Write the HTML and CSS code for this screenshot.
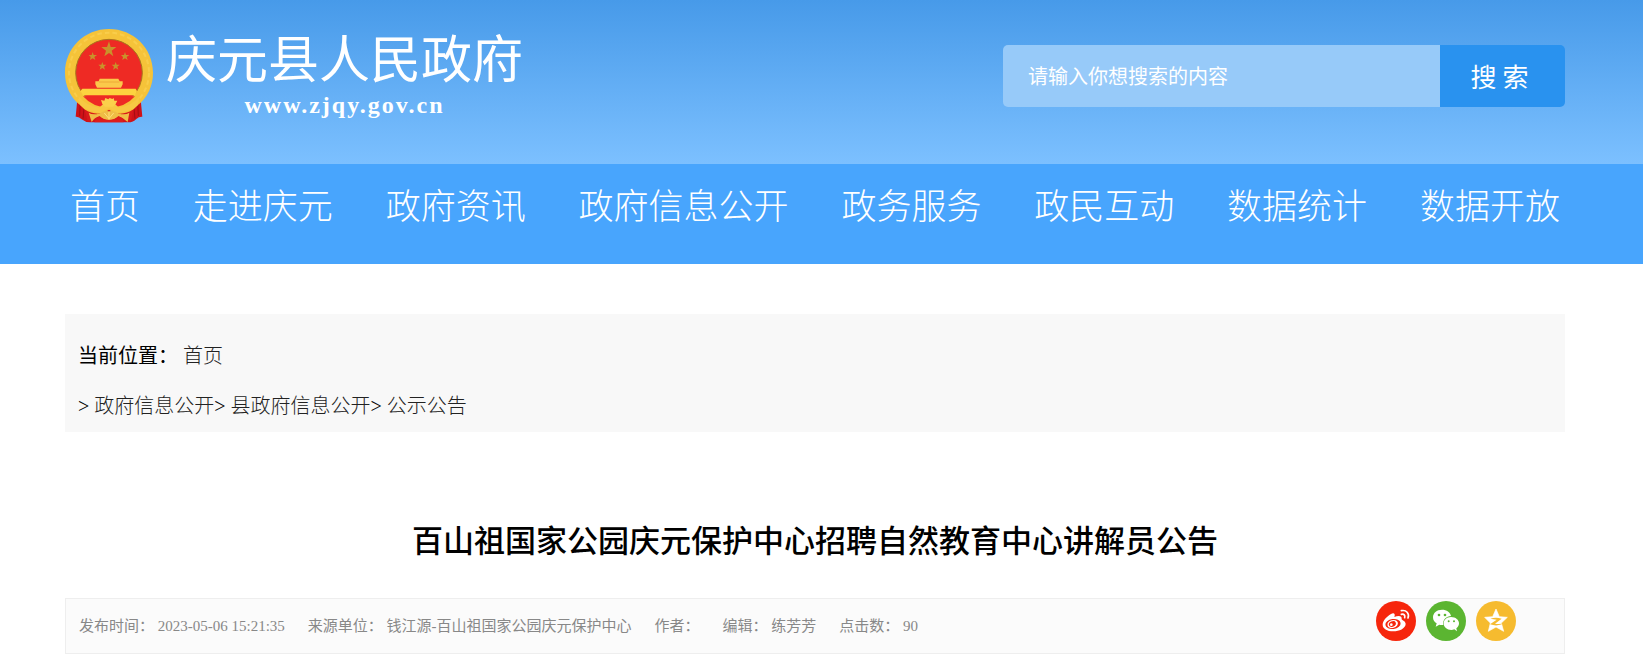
FILE: index.html
```html
<!DOCTYPE html>
<html lang="zh-CN">
<head>
    <meta charset="UTF-8">
    <meta name="viewport" content="width=device-width, initial-scale=1.0">
    <title>百山祖国家公园庆元保护中心招聘自然教育中心讲解员公告</title>
    <link rel="stylesheet" href="styles.css">
</head>
<body>
    <header class="header">
        <div class="wrap header-inner">
            <a class="logo" href="#">
                <svg class="emblem" viewBox="30 27 264 282" aria-hidden="true">
                    <!-- red drapes -->
                    <path d="M68 228 L62 290 Q72 289 80 298 Q92 308 108 307 L217 307 Q234 308 244 297 Q252 289 262 290 L256 228 Z" fill="#cf1218"/>
                    <path d="M76 240 L74 288 M88 252 L84 296 M248 240 L250 288 M236 252 L240 296" stroke="#a50d12" stroke-width="3" fill="none"/>
                    <!-- gold ring -->
                    <path d="M162 27 C235 27 294 84 294 158 C294 198 278 232 248 256 L236 268 Q200 300 162 290 Q124 300 88 268 L76 256 C46 232 30 198 30 158 C30 84 89 27 162 27 Z" fill="#f5c339"/>
                    <circle cx="162" cy="158" r="120" fill="none" stroke="#f9cd4b" stroke-width="6" stroke-dasharray="14 9"/>
                    <circle cx="162" cy="158" r="100" fill="#ee2a24" stroke="#a8741c" stroke-width="3"/>
                    <!-- stars -->
                    <g fill="#c9922b">
                        <path d="M162 64 L167 81 L184 81 L170 92 L175 109 L162 99 L148 109 L153 92 L139 81 L156 81 Z"/>
                        <path d="M113 96 L116 105 L126 105 L118 111 L121 120 L113 115 L105 120 L107 111 L101 105 L110 105 Z"/>
                        <path d="M210 96 L213 105 L223 105 L215 111 L218 120 L210 115 L202 120 L204 111 L198 105 L207 105 Z"/>
                        <path d="M142 126 L145 134 L154 134 L147 140 L150 149 L142 144 L134 149 L137 140 L130 134 L139 134 Z"/>
                        <path d="M182 126 L185 134 L194 134 L187 140 L190 149 L182 144 L174 149 L177 140 L170 134 L179 134 Z"/>
                    </g>
                    <!-- gate -->
                    <path d="M134 176 H190 L194 184 H203 V193 L198 203 H126 L121 193 V184 H131 Z" fill="#fbc94a"/>
                    <path d="M132 186 H193" stroke="#e79b2f" stroke-width="2"/>
                    <path d="M82 206 H242 L246 214 L240 226 H84 L76 214 Z" fill="#fdd23f"/>
                    <path d="M84 229 H240 Q210 263 162 263 Q114 263 84 229 Z" fill="#ee2a24"/>
                    <!-- ribbon and gear -->
                    <path d="M70 228 Q92 257 132 263 L145 252 Q162 236 180 252 L192 263 Q232 257 254 228 L248 256 Q226 277 184 278 L162 264 L140 278 Q98 277 76 256 Z" fill="#f7c843"/>
                    <path d="M142 252 L138 240 L148 242 L151 234 L160 238 L164 234 L172 237 L176 234 L178 242 L187 242 L182 252 L174 260 H150 Z" fill="#fbd04b"/>
                    <path d="M88 268 Q120 288 150 277 L162 269 L174 277 Q204 288 236 268 L228 302 L98 302 Z" fill="#d8191b"/>
                    <path d="M101 278 Q112 286 132 281 Q146 271 162 274 Q180 271 192 281 Q212 286 223 278 L218 306 Q206 293 190 289 Q180 300 162 300 Q144 300 134 289 Q118 293 110 306 Z" fill="#efbd45"/>
                    <path d="M148 279 L162 296 L176 279 M162 276 V298" stroke="#ffe07a" stroke-width="3" fill="none"/>
                    <path d="M124 295 Q130 290 134 289 Q144 300 162 300 Q180 300 190 289 Q196 290 202 295 L206 307 H118 Z" fill="#dd1d1c"/>
                </svg>
                <span class="logo-text">
                    <strong class="site-name">庆元县人民政府</strong>
                    <span class="site-url">www.zjqy.gov.cn</span>
                </span>
            </a>
            <form class="search">
                <input class="search-input" type="text" aria-label="搜索内容" placeholder="请输入你想搜索的内容">
                <button class="search-btn" type="submit">搜 索</button>
            </form>
        </div>
    </header>

    <nav class="nav">
        <ul class="wrap nav-list">
            <li><a href="#">首页</a></li>
            <li><a href="#">走进庆元</a></li>
            <li><a href="#">政府资讯</a></li>
            <li><a href="#">政府信息公开</a></li>
            <li><a href="#">政务服务</a></li>
            <li><a href="#">政民互动</a></li>
            <li><a href="#">数据统计</a></li>
            <li><a href="#">数据开放</a></li>
        </ul>
    </nav>

    <main class="wrap">
        <div class="crumbs">
            <p>当前位置： <a href="#">首页</a></p>
            <p>&gt; <a href="#">政府信息公开</a>&gt; <a href="#">县政府信息公开</a>&gt; <a href="#">公示公告</a></p>
        </div>

        <h1 class="title">百山祖国家公园庆元保护中心招聘自然教育中心讲解员公告</h1>

        <div class="meta">
            <div class="meta-info">
                <span>发布时间： 2023-05-06 15:21:35</span>
                <span>来源单位： 钱江源-百山祖国家公园庆元保护中心</span>
                <span>作者：</span>
                <span>编辑： 练芳芳</span>
                <span>点击数： 90</span>
            </div>
            <div class="share">
                <a href="#" aria-label="微博">
                    <svg viewBox="0 0 120 120">
                        <circle cx="60" cy="60" r="60" fill="#f6260c"/>
                        <path d="M45 39 C53 33 59 38 55 48 C66 43 79 43 77 54 C76 58 89 59 89 69 C88 83 70 91 52 91 C33 91 20 83 20 71 C20 60 32 46 45 39 Z" fill="#fff"/>
                        <ellipse cx="51" cy="69" rx="23" ry="15" transform="rotate(-8 51 69)" fill="#f6260c"/>
                        <ellipse cx="50" cy="69" rx="16" ry="12" transform="rotate(-15 50 69)" fill="#fff"/>
                        <ellipse cx="49" cy="69" rx="11" ry="8" transform="rotate(-25 49 69)" fill="#f6260c"/>
                        <circle cx="46" cy="71" r="4" fill="#fff"/>
                        <path d="M76 29 C91 26 101 37 96 51 M76 40 C84 38 88 43 86 50" fill="none" stroke="#fff" stroke-width="5" stroke-linecap="round"/>
                    </svg>
                </a>
                <a href="#" aria-label="微信">
                    <svg viewBox="0 0 120 120">
                        <circle cx="60" cy="60" r="60" fill="#5bb531"/>
                        <path d="M48 26 C32 26 21 36 21 49 C21 57 25 63 32 67 L29 77 L40 71 C44 72 47 72 52 72 C49 56 62 45 75 45 C73 34 62 26 48 26 Z" fill="#fff"/>
                        <path d="M75 48 C62 48 53 57 53 67 C53 79 63 87 76 87 C79 87 82 86 85 85 L93 91 L91 82 C96 78 99 73 99 67 C99 57 89 48 75 48 Z" fill="#fff"/>
                        <g fill="#5bb531">
                            <circle cx="39" cy="42" r="4"/>
                            <circle cx="57" cy="42" r="4"/>
                            <circle cx="68" cy="61" r="3"/>
                            <circle cx="84" cy="61" r="3"/>
                        </g>
                    </svg>
                </a>
                <a href="#" aria-label="QQ空间">
                    <svg viewBox="0 0 120 120">
                        <circle cx="60" cy="60" r="60" fill="#f6bb2f"/>
                        <path d="M60 24 L70 47 L94 49 L76 66 L83 91 L60 78 L37 91 L43 66 L26 49 L50 47 Z" fill="#fff" stroke="#fff" stroke-width="2" stroke-linejoin="round"/>
                        <path d="M43 53 Q60 48 77 53 L57 68 Q70 71 84 67 Q64 78 42 70 L62 56 Q52 54 43 53 Z" fill="#f6bb2f"/>
                    </svg>
                </a>
            </div>
        </div>
    </main>
</body>
</html>
```
FILE: styles.css
```css
* {
    margin: 0;
    padding: 0;
    box-sizing: border-box;
}

body {
    font-family: "Liberation Serif", "Noto Sans CJK SC", serif;
    font-size: 20px;
    color: #000;
    background: #fff;
}

a {
    color: inherit;
    text-decoration: none;
}

ul {
    list-style: none;
}

.wrap {
    margin: 0 78px 0 65px;
}

/* header */
.header {
    padding: 29px 0 41px;
    background: linear-gradient(#479ae9, #7cc0ff);
}

.header-inner {
    display: flex;
    justify-content: space-between;
    align-items: flex-start;
}

.logo {
    display: flex;
    gap: 13px;
    color: #fff;
}

.emblem {
    width: 88px;
    height: 94px;
}

.logo-text {
    display: flex;
    flex-direction: column;
    align-items: center;
}

.site-name {
    font-size: 51px;
    font-weight: 400;
    line-height: 64px;
}

.site-url {
    font-size: 24px;
    font-weight: 700;
    line-height: 24px;
    letter-spacing: 2px;
}

.search {
    display: flex;
    width: 562px;
    height: 62px;
    margin-top: 16px;
    border-radius: 5px;
    overflow: hidden;
}

.search-input {
    flex: 1;
    min-width: 0;
    padding: 0 25px 2px;
    border: none;
    outline: none;
    font-family: "Noto Sans CJK SC", sans-serif;
    font-size: 20px;
    color: #fff;
    background: #97caf9;
}

.search-input::placeholder {
    color: #fff;
    opacity: 1;
}

.search-btn {
    width: 125px;
    padding: 0 6px 2px 0;
    border: none;
    font-family: "Noto Sans CJK SC", sans-serif;
    font-size: 26px;
    color: #fff;
    background: #2992ef;
    cursor: pointer;
}

/* main nav */
.nav {
    height: 100px;
    background: #48a5fd;
}

.nav-list {
    display: flex;
    justify-content: space-between;
    padding: 0 5px;
    font-size: 35px;
    font-weight: 300;
    line-height: 88px;
    color: #fff;
    white-space: nowrap;
}

/* breadcrumb */
.crumbs {
    margin-top: 50px;
    padding: 17px 13px 1px;
    line-height: 50px;
    background: #f8f8f8;
}

.crumbs a {
    font-weight: 300;
    color: #222;
}

/* article */
.title {
    margin-top: 80px;
    font-size: 31px;
    font-weight: 500;
    line-height: 60px;
    text-align: center;
}

.meta {
    display: flex;
    justify-content: space-between;
    margin-top: 26px;
    padding: 0 48px 0 13px;
    border: 1px solid #eee;
    background: #fbfbfb;
}

.meta-info {
    display: flex;
    gap: 23px;
    font-size: 15px;
    line-height: 54px;
    color: #888;
}

.share {
    display: flex;
    gap: 10px;
    padding-top: 2px;
}

.share svg {
    display: block;
    width: 40px;
    height: 40px;
}
```
